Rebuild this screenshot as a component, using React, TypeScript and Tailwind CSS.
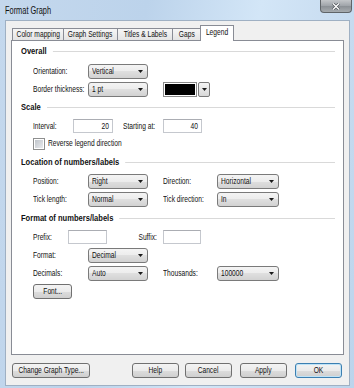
import React from "react";

type TP = { children: React.ReactNode; o?: string; b?: boolean };

function T({ children, o = "origin-left", b = false }: TP) {
  return (
    <span
      className={
        "inline-block whitespace-nowrap leading-[11px] " +
        (b ? "scale-x-[0.84] font-bold " : "scale-x-[0.74] ") +
        o
      }
    >
      {children}
    </span>
  );
}

function Arrow() {
  return (
    <svg width="5" height="3" viewBox="0 0 5 3" className="shrink-0">
      <path d="M0 0H5L2.5 3Z" fill="#1a1a1a" />
    </svg>
  );
}

function Select({ value, w }: { value: string; w: string }) {
  return (
    <div
      className={
        "flex h-[15px] items-center justify-between overflow-hidden rounded-[3px] border border-[#7a7a7a] bg-[linear-gradient(#f4f4f4_0%,#ececec_50%,#dfdfdf_50%,#d2d2d2_100%)] pl-[3px] pr-[4px] " +
        w
      }
    >
      <T>{value}</T>
      <Arrow />
    </div>
  );
}

function Input({ value, w }: { value?: string; w: string }) {
  return (
    <div
      className={
        "flex h-[14px] items-center justify-end border border-[#c5c8ce] border-t-[#abadb3] bg-white pr-[3px] " +
        w
      }
    >
      {value ? <T o="origin-right">{value}</T> : null}
    </div>
  );
}

function Label({ text, w }: { text: string; w: string }) {
  return (
    <div className={"flex items-center " + w}>
      <T>{text}</T>
    </div>
  );
}

function Header({ text, h }: { text: string; h: string }) {
  return (
    <div className={"grid items-center pl-[9px] pr-[8px] " + h}>
      <div className="col-start-1 row-start-1 h-px bg-[#d9d9d9]" />
      <div className="col-start-1 row-start-1 flex">
        <span className="inline-block origin-left scale-x-[0.84] whitespace-nowrap bg-white pr-[7px] font-bold leading-[11px]">
          {text}
        </span>
      </div>
    </div>
  );
}

function Row({ children }: { children: React.ReactNode }) {
  return <div className="flex h-[18px] items-center pl-[21px]">{children}</div>;
}

function Button({ text, w, def = false }: { text: string; w: string; def?: boolean }) {
  return (
    <div
      className={
        "flex h-[15px] items-center justify-center overflow-hidden rounded-[3px] border bg-[linear-gradient(#f3f3f3_0%,#ebebeb_50%,#dddddd_50%,#cfcfcf_100%)] " +
        (def
          ? "border-[#3c7fb1] shadow-[inset_0_0_0_1px_#bfe3f7] "
          : "border-[#707070] ") +
        w
      }
    >
      <T o="origin-center">{text}</T>
    </div>
  );
}

function Tab({ label, w, sel = false, first = false }: { label: string; w: string; sel?: boolean; first?: boolean }) {
  return (
    <div
      className={
        "flex items-center justify-center border border-b-0 border-[#898c95] " +
        (first ? "" : "-ml-px ") +
        (sel
          ? "relative z-10 -mb-px h-[16px] bg-white pb-[2px] "
          : "h-[12px] bg-[linear-gradient(#f6f6f6,#e4e4e4)] ") +
        w
      }
    >
      <T o="origin-center">{label}</T>
    </div>
  );
}

export default function App() {
  return (
    <div className="flex h-[388px] w-[354px] flex-col overflow-hidden bg-[linear-gradient(100deg,#c4d8ed_0%,#bcd3eb_35%,#d3e6f7_62%,#c9ddf1_80%,#bcd4ec_100%)] font-['Liberation_Sans',Arial,sans-serif] text-[9px] text-[#111]">
      {/* title bar */}
      <div className="flex h-[20px] shrink-0 items-start justify-between">
        <div className="pl-[5px] pt-[3px] text-[10px]">
          <T>Format Graph</T>
        </div>
        <div className="mr-[2px] flex h-[13px] w-[32px] items-center justify-center rounded-b-[4px] border border-t-0 border-[#5f6468] bg-[linear-gradient(#c3c6c9,#9ea3a8_50%,#8b9095_51%,#a6abaf)]">
          <svg width="8" height="7" viewBox="0 0 8 7">
            <path d="M1 0.5L7 6.5M7 0.5L1 6.5" stroke="#4b4f53" strokeWidth="2.6" />
            <path d="M1 0.5L7 6.5M7 0.5L1 6.5" stroke="#ffffff" strokeWidth="1.4" />
          </svg>
        </div>
      </div>

      {/* client area */}
      <div className="mb-[2px] ml-[5px] mr-[4px] flex flex-1 flex-col border border-[#9fb0c3] bg-[#f0f0f0]">
        {/* tabs */}
        <div className="mt-[4px] flex h-[15px] items-end pl-[6px]">
          <Tab label="Color mapping" w="w-[52px]" first />
          <Tab label="Graph Settings" w="w-[55px]" />
          <Tab label="Titles & Labels" w="w-[56px]" />
          <Tab label="Gaps" w="w-[29px]" />
          <Tab label="Legend" w="w-[34px]" sel />
        </div>

        {/* panel */}
        <div className="ml-[5px] flex h-[315px] w-[333px] flex-col border border-[#898c95] bg-white">
          <Header text="Overall" h="h-[21px]" />
          <Row>
            <Label text="Orientation:" w="w-[55px]" />
            <Select value="Vertical" w="w-[60px]" />
          </Row>
          <Row>
            <Label text="Border thickness:" w="w-[55px]" />
            <Select value="1 pt" w="w-[60px]" />
            <div className="ml-[15px] flex h-[15px] w-[47px]">
              <div className="flex flex-1 border border-[#8a8a8a] bg-white p-px">
                <div className="flex-1 bg-black" />
              </div>
              <div className="ml-px flex w-[12px] items-center justify-center rounded-[2px] border border-[#7a7a7a] bg-[linear-gradient(#f4f4f4,#d8d8d8)]">
                <Arrow />
              </div>
            </div>
          </Row>

          <Header text="Scale" h="h-[19px]" />
          <Row>
            <Label text="Interval:" w="w-[40px]" />
            <Input value="20" w="w-[40px]" />
            <Label text="Starting at:" w="ml-[10px] w-[40px]" />
            <Input value="40" w="w-[39px]" />
          </Row>
          <div className="flex h-[17px] items-center pl-[21px]">
            <div className="flex h-[12px] w-[12px] items-center justify-center border border-[#8e8f8f] bg-white">
              <div className="h-[8px] w-[8px] bg-[linear-gradient(135deg,#bfc4ca,#e9ebee)]" />
            </div>
            <div className="ml-[3px]">
              <T>Reverse legend direction</T>
            </div>
          </div>

          <Header text="Location of numbers/labels" h="h-[20px]" />
          <Row>
            <Label text="Position:" w="w-[55px]" />
            <Select value="Right" w="w-[60px]" />
            <Label text="Direction:" w="ml-[15px] w-[54px]" />
            <Select value="Horizontal" w="w-[62px]" />
          </Row>
          <Row>
            <Label text="Tick length:" w="w-[55px]" />
            <Select value="Normal" w="w-[60px]" />
            <Label text="Tick direction:" w="ml-[15px] w-[54px]" />
            <Select value="In" w="w-[62px]" />
          </Row>

          <Header text="Format of numbers/labels" h="h-[20px]" />
          <Row>
            <Label text="Prefix:" w="w-[35px]" />
            <Input w="w-[39px]" />
            <div className="flex w-[56px] justify-end pr-[6px]">
              <T o="origin-right">Suffix:</T>
            </div>
            <Input w="w-[38px]" />
          </Row>
          <Row>
            <Label text="Format:" w="w-[55px]" />
            <Select value="Decimal" w="w-[60px]" />
          </Row>
          <Row>
            <Label text="Decimals:" w="w-[55px]" />
            <Select value="Auto" w="w-[60px]" />
            <Label text="Thousands:" w="ml-[15px] w-[54px]" />
            <Select value="100000" w="w-[62px]" />
          </Row>
          <div className="flex h-[19px] items-center pl-[21px]">
            <Button text="Font..." w="h-[14px] w-[39px]" />
          </div>
        </div>

        {/* buttons */}
        <div className="mt-[8px] flex pl-[6px]">
          <Button text="Change Graph Type..." w="w-[78px]" />
          <Button text="Help" w="ml-[42px] w-[47px]" />
          <Button text="Cancel" w="ml-[6px] w-[47px]" />
          <Button text="Apply" w="ml-[8px] w-[47px]" />
          <Button text="OK" w="ml-[8px] w-[47px]" def />
        </div>
      </div>
    </div>
  );
}
